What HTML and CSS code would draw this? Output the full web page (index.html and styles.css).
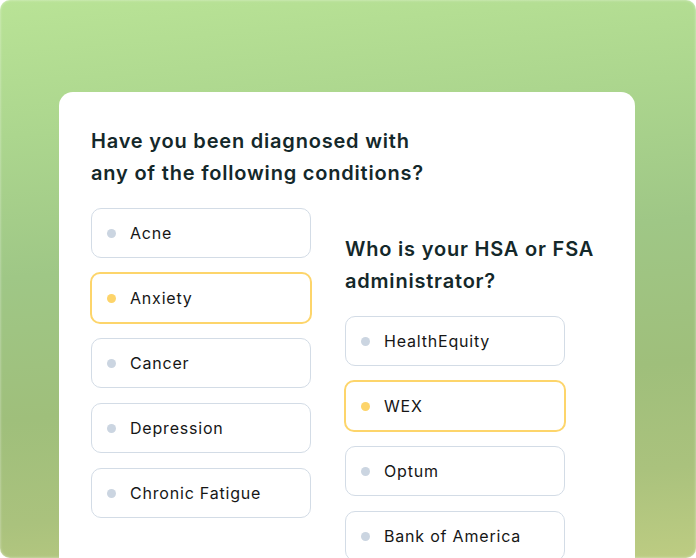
FILE: index.html
```html
<!DOCTYPE html>
<html>
<head>
<meta charset="utf-8">
<link rel="stylesheet" href="styles.css">
</head>
<body>
<div class="frame">
  <div class="card">
    <div class="col">
      <h2 class="q">Have you been diagnosed with<br>any of the following conditions?</h2>
      <ul class="opts">
        <li class="opt"><span class="dot"></span>Acne</li>
        <li class="opt sel"><span class="dot"></span>Anxiety</li>
        <li class="opt"><span class="dot"></span>Cancer</li>
        <li class="opt"><span class="dot"></span>Depression</li>
        <li class="opt"><span class="dot"></span>Chronic Fatigue</li>
      </ul>
    </div>
    <div class="col right">
      <h2 class="q">Who is your HSA or FSA<br>administrator?</h2>
      <ul class="opts">
        <li class="opt"><span class="dot"></span>HealthEquity</li>
        <li class="opt sel"><span class="dot"></span>WEX</li>
        <li class="opt"><span class="dot"></span>Optum</li>
        <li class="opt"><span class="dot"></span>Bank of America</li>
      </ul>
    </div>
  </div>
</div>
</body>
</html>
```

FILE: styles.css
```css
html, body {
  margin: 0;
  padding: 0;
  background: #ffffff;
}
body {
  width: 696px;
  height: 558px;
  overflow: hidden;
  font-family: Inter, "Noto Sans", sans-serif;
}
.frame {
  width: 696px;
  height: 558px;
  box-sizing: border-box;
  border-radius: 10px;
  overflow: hidden;
  padding: 92px 61px 0 59px;
  background: linear-gradient(175deg, #b9e396 0%, #acd68e 22%, #9fc786 45%, #9fbf7b 68%, #aac27d 85%, #bdcc82 100%);
  box-shadow: inset 0 0 3px rgba(255,255,255,0.55);
}
.card {
  background: #ffffff;
  border-radius: 14px 14px 0 0;
  height: 500px;
  box-sizing: border-box;
  padding: 33px 0 0 32px;
  display: flex;
  gap: 34px;
}
.col {
  width: 220px;
  flex: none;
}
.right {
  padding-top: 108px;
  width: 270px;
}
.q {
  margin: 0;
  font-size: 20px;
  font-weight: 600;
  line-height: 32px;
  color: #14282a;
  letter-spacing: 0.8px;
  white-space: nowrap;
}
.opts {
  list-style: none;
  margin: 19px 0 0 0;
  padding: 0;
  display: flex;
  flex-direction: column;
  gap: 15px;
  width: 220px;
}
.opt {
  height: 50px;
  box-sizing: border-box;
  border: 1px solid #d3dce6;
  border-radius: 10px;
  display: flex;
  align-items: center;
  padding-left: 15px;
  font-size: 16px;
  color: #161616;
  letter-spacing: 0.8px;
}
.opt.sel {
  border: 2px solid #fdd56b;
  margin: -1px;
  height: 52px;
  padding-left: 15px;
}
.dot {
  width: 9px;
  height: 9px;
  border-radius: 50%;
  background: #cbd5e1;
  margin-right: 14px;
  flex: none;
}
.sel .dot {
  background: #fdd46a;
}
```
